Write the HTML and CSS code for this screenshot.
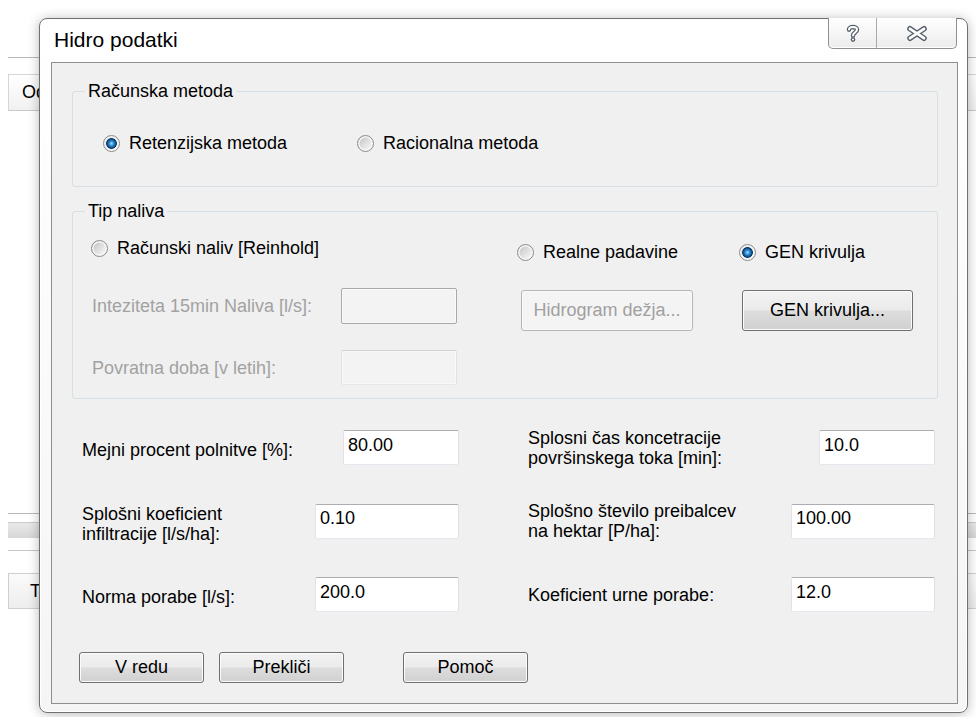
FILE: index.html
```html
<!DOCTYPE html>
<html lang="sl">
<head>
<meta charset="utf-8">
<title>Hidro podatki</title>
<link rel="stylesheet" href="styles.css">
</head>
<body>
<div class="desktop">

  <!-- application window behind the dialog -->
  <div class="app">
    <div class="app-toolbar"></div>
    <div class="app-header"><span>Od</span></div>
    <div class="app-scroll"><div class="app-scroll-band"></div></div>
    <div class="app-row"><span>Ti</span></div>
  </div>

  <section class="dialog">
    <header class="titlebar">
      <span class="title">Hidro podatki</span>
      <div class="caption-buttons">
        <button class="cap cap-help" type="button" aria-label="Pomoč">
          <svg width="16" height="20" viewBox="0 0 16 20">
            <path d="M4 6.6C4 3.2 12 3.2 12 6.6C12 9.6 8 9.4 8 12.6" fill="none" stroke="#56606c" stroke-width="4.6" stroke-linecap="round"/>
            <path d="M4 6.6C4 3.2 12 3.2 12 6.6C12 9.6 8 9.4 8 12.6" fill="none" stroke="#fff" stroke-width="2" stroke-linecap="round"/>
            <circle cx="8" cy="16.6" r="2.3" fill="#56606c"/>
            <circle cx="8" cy="16.6" r="1" fill="#fff"/>
          </svg>
        </button>
        <button class="cap cap-close" type="button" aria-label="Zapri">
          <svg width="24" height="17" viewBox="0 0 24 17">
            <path d="M5 3.8L19 13.2M19 3.8L5 13.2" fill="none" stroke="#56606c" stroke-width="5.6" stroke-linecap="round"/>
            <path d="M5 3.8L19 13.2M19 3.8L5 13.2" fill="none" stroke="#fff" stroke-width="2.8" stroke-linecap="round"/>
          </svg>
        </button>
      </div>
    </header>

    <div class="client">
      <fieldset class="group">
        <legend>Računska metoda</legend>
        <div class="method-body">
          <label class="radio"><span class="radio-mark checked"></span>Retenzijska metoda</label>
          <label class="radio"><span class="radio-mark"></span>Racionalna metoda</label>
        </div>
      </fieldset>

      <fieldset class="group group-naliv">
        <legend>Tip naliva</legend>
        <div class="naliv-body">
          <div class="naliv-left">
            <label class="radio radio-first"><span class="radio-mark"></span>Računski naliv [Reinhold]</label>
            <div class="naliv-field naliv-field-1">
              <span class="muted">Inteziteta 15min Naliva [l/s]:</span>
              <input class="input input-off input-off-dark" type="text" disabled>
            </div>
            <div class="naliv-field naliv-field-2">
              <span class="muted">Povratna doba [v letih]:</span>
              <input class="input input-off" type="text" disabled>
            </div>
          </div>
          <div class="naliv-col naliv-col-real">
            <label class="radio radio-side"><span class="radio-mark"></span>Realne padavine</label>
            <button class="btn btn-wide btn-real" type="button" disabled>Hidrogram dežja...</button>
          </div>
          <div class="naliv-col naliv-col-gen">
            <label class="radio radio-side"><span class="radio-mark checked"></span>GEN krivulja</label>
            <button class="btn btn-wide btn-gen" type="button">GEN krivulja...</button>
          </div>
        </div>
      </fieldset>

      <div class="fields">
        <div class="field">
          <span class="field-label nudge">Mejni procent polnitve [%]:</span>
          <input class="input w-short" type="text" value="80.00">
        </div>
        <div class="field">
          <span class="field-label">Splosni čas koncetracije<br>površinskega toka [min]:</span>
          <input class="input w-short" type="text" value="10.0">
        </div>
        <div class="field">
          <span class="field-label nudge">Splošni koeficient<br>infiltracije [l/s/ha]:</span>
          <input class="input w-long" type="text" value="0.10">
        </div>
        <div class="field">
          <span class="field-label">Splošno število preibalcev<br>na hektar [P/ha]:</span>
          <input class="input w-long" type="text" value="100.00">
        </div>
        <div class="field">
          <span class="field-label nudge">Norma porabe [l/s]:</span>
          <input class="input w-long" type="text" value="200.0">
        </div>
        <div class="field">
          <span class="field-label">Koeficient urne porabe:</span>
          <input class="input w-long" type="text" value="12.0">
        </div>
      </div>

      <div class="actions">
        <button class="btn" type="button">V redu</button>
        <button class="btn btn-cancel" type="button">Prekliči</button>
        <button class="btn btn-help" type="button">Pomoč</button>
      </div>
    </div>
  </section>
</div>
</body>
</html>
```

FILE: styles.css
```css
* {
  box-sizing: border-box;
}

html,
body {
  margin: 0;
  height: 100%;
}

body {
  background: #fff;
  color: #000;
  font-family: "Liberation Sans", Arial, sans-serif;
  font-size: 18px;
  overflow: hidden;
}

.desktop {
  position: relative;
  width: 976px;
  height: 717px;
}

/* ---- application window underneath ---- */
.app {
  padding-left: 8px;
}

.app-toolbar {
  height: 58px;
  border-bottom: 1px solid #b9b9b9;
}

.app-header {
  display: flex;
  align-items: center;
  height: 37px;
  margin-top: 16px;
  padding-left: 13px;
  border: 1px solid #d6d6d6;
  border-bottom-color: #c8c8c8;
  border-right: 0;
  background: linear-gradient(#ffffff, #f1f1f1);
}

.app-scroll {
  height: 38px;
  margin-top: 402px;
  padding-top: 8px;
  border-top: 1px solid #b8b8b8;
  border-bottom: 1px solid #c6c6c6;
}

.app-scroll-band {
  height: 16px;
  border-top: 1px solid #c9c9c9;
  background: linear-gradient(#e9e9e9, #d6d6d6);
}

.app-row {
  display: flex;
  align-items: center;
  height: 36px;
  margin-top: 22px;
  padding-left: 21px;
  border: 1px solid #cfcfcf;
  border-right: 0;
  background: linear-gradient(#fbfbfb, #ededed);
}

/* ---- dialog window ---- */
.dialog {
  position: absolute;
  left: 39px;
  top: 18px;
  width: 929px;
  height: 695px;
  display: flex;
  flex-direction: column;
  border: 1px solid #707070;
  border-radius: 8px;
  background: linear-gradient(#ffffff, #f5f5f5);
  box-shadow: inset 0 0 0 1px #ffffff, 0 1px 12px rgba(0, 0, 0, 0.28);
}

.titlebar {
  flex: none;
  height: 43px;
  display: flex;
  justify-content: space-between;
  align-items: flex-start;
  padding-left: 14px;
}

.title {
  margin-top: 9px;
  font-size: 21px;
  line-height: 24px;
}

.caption-buttons {
  display: flex;
  margin-top: -1px;
  margin-right: 10px;
  border: 1px solid #8d8f92;
  border-top: 0;
  border-radius: 0 0 5px 5px;
  overflow: hidden;
  background: linear-gradient(#ffffff, #ececec);
  box-shadow: inset 0 -1px 0 #ffffff;
}

.cap {
  display: flex;
  align-items: center;
  justify-content: center;
  height: 30px;
  margin: 0;
  padding: 0;
  border: 0;
  background: transparent;
}

.cap-help {
  width: 48px;
  border-right: 1px solid #a7aaad;
}

.cap-close {
  width: 79px;
}

.client {
  flex: none;
  height: 642px;
  margin: 0 9px 0 11px;
  padding: 18px 0 0 20px;
  border: 1px solid #8e8e8e;
  background: #f0f0f0;
}

/* ---- push buttons ---- */
.btn {
  width: 125px;
  height: 31px;
  margin: 0;
  padding: 0;
  font: inherit;
  font-size: 18px;
  color: #000;
  white-space: nowrap;
  border: 1px solid #707070;
  border-radius: 3px;
  background: linear-gradient(#f2f2f2 0%, #ebebeb 48%, #dddddd 52%, #d0d0d0 100%);
  box-shadow: inset 0 0 0 1px #fbfbfb;
}

.btn:disabled {
  color: #a0a0a0;
  border-color: #b3b6b9;
  background: #f4f4f4;
  box-shadow: inset 0 0 0 1px #fafafa;
}

.actions {
  display: flex;
  margin: 40px 0 0 7px;
}

.btn-cancel {
  margin-left: 15px;
}

.btn-help {
  margin-left: 59px;
}

/* ---- group boxes ---- */
.group {
  width: 866px;
  min-width: 0;
  margin: 0;
  padding: 0;
  border: 1px solid #d5dfe5;
  border-radius: 3px;
}

.group legend {
  height: 20px;
  margin-left: 12px;
  padding: 0 3px;
  line-height: 20px;
}

.group-naliv {
  margin-top: 14px;
}

.method-body {
  display: flex;
  gap: 70px;
  height: 85px;
  padding: 32px 0 0 30px;
}

.naliv-body {
  display: flex;
  height: 177px;
  padding-left: 18px;
}

.naliv-left {
  display: flex;
  flex-direction: column;
  width: 366px;
}

.radio-first {
  margin-top: 17px;
}

.naliv-field {
  display: flex;
  justify-content: space-between;
  align-items: center;
  padding-left: 1px;
}

.naliv-field-1 {
  height: 36px;
  margin-top: 30px;
}

.naliv-field-2 {
  height: 35px;
  margin-top: 26px;
}

.naliv-field .input {
  width: 116px;
  height: 100%;
}

.naliv-col {
  display: flex;
  flex-direction: column;
  align-items: flex-start;
}

.naliv-col-real {
  margin-left: 60px;
}

.naliv-col-gen {
  margin-left: 46px;
}

.radio-side {
  margin-top: 21px;
}

.btn.btn-wide {
  height: 41px;
  margin-top: 28px;
}

.btn.btn-real {
  width: 172px;
  margin-left: 4px;
}

.btn.btn-gen {
  width: 171px;
  margin-left: 3px;
}

.muted {
  color: #a2a2a2;
  line-height: 20px;
}

/* ---- radio buttons ---- */
.radio {
  display: flex;
  align-items: center;
  gap: 9px;
  height: 20px;
  line-height: 20px;
  white-space: nowrap;
}

.radio-mark {
  flex: none;
  width: 17px;
  height: 17px;
  border: 1px solid #8b8c8d;
  border-radius: 50%;
  background: linear-gradient(135deg, #c8c8c8 15%, #f6f6f6 85%);
  box-shadow: inset 0 0 0 1.5px #f7f7f7;
}

.radio-mark.checked {
  background:
    radial-gradient(circle at 50% 50%, #a6e0fb 0, #3f9fe2 1.8px, #1a66a6 3.4px, #0c3a68 5px, rgba(12, 58, 104, 0) 5.7px),
    linear-gradient(135deg, #c8c8c8 15%, #f6f6f6 85%);
}

/* ---- numeric fields ---- */
.fields {
  display: grid;
  grid-template-columns: 377px 407px;
  grid-template-rows: repeat(3, 35px);
  column-gap: 69px;
  row-gap: 38.5px;
  margin: 31px 0 0 10px;
}

.field {
  display: flex;
  justify-content: space-between;
  align-items: center;
}

.field-label {
  line-height: 20px;
  white-space: nowrap;
}

.nudge {
  padding-top: 5px;
}

.input {
  height: 35px;
  margin: 0;
  padding: 4px 4px 9px;
  font: inherit;
  font-size: 18px;
  line-height: 20px;
  color: #000;
  border: 1px solid;
  border-color: #abadb3 #dbdfe6 #e3e9ef #e2e3ea;
  border-radius: 2px;
  background: #fff;
  outline: none;
}

.w-short {
  width: 116px;
}

.w-long {
  width: 144px;
}

.input-off {
  background: #f3f3f3;
  border-color: #cfd2d6 #dfe3e8 #e5e9ee #dfe3e8;
  box-shadow: inset 0 0 0 1px #f9f9f9;
}

.input-off-dark {
  border-color: #a9a9a9;
}
```
